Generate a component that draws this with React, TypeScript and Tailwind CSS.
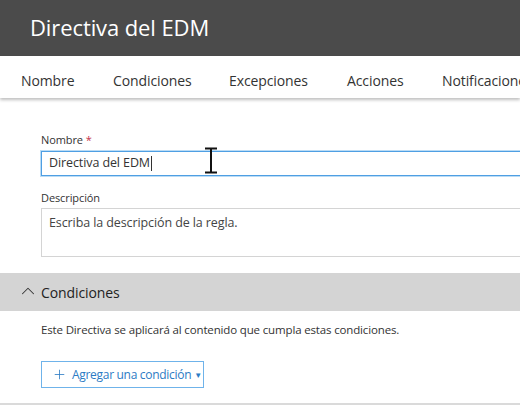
import { ChevronUp, Plus } from 'lucide-react';

const tabs = [
  { label: 'Nombre', w: 'w-[92px]' },
  { label: 'Condiciones', w: 'w-[116px]' },
  { label: 'Excepciones', w: 'w-[118px]' },
  { label: 'Acciones', w: 'w-[95px]' },
  { label: 'Notificaciones', w: 'w-[120px]' },
];

export default function App() {
  return (
    <div
      className="w-[520px] h-[407px] overflow-hidden bg-white text-[#333]"
      style={{ fontFamily: '"Open Sans", "Noto Sans", sans-serif' }}
    >
      {/* Header */}
      <div className="h-14 bg-[#4b4b4b] px-[30px] flex items-center">
        <h1 className="text-[22px] text-white tracking-[-0.1px] pb-[1px]">Directiva del EDM</h1>
      </div>

      {/* Tabs */}
      <nav className="h-[42px] bg-white flex items-center pl-[21px] shadow-[0_2px_3px_rgba(0,0,0,0.25)] relative z-10 whitespace-nowrap">
        {tabs.map((t) => (
          <div key={t.label} className={`${t.w} shrink-0 text-[14px] text-[#333] tracking-[-0.1px] pt-[6px]`}>
            {t.label}
          </div>
        ))}
      </nav>

      {/* Form */}
      <div className="pl-[41px] pt-[34px] relative">
        <label className="block text-[11px] text-[#333] leading-4 tracking-[-0.1px]">
          Nombre <span className="text-[#c4314b]">*</span>
        </label>
        <div className="mt-[3px] w-[500px] h-[25px] border border-[#4f9fe3] shadow-[0_0_0_1px_rgba(120,185,236,0.5)] flex items-center px-[7px] text-[12.5px] text-[#333] tracking-[-0.1px]">
          Directiva del EDM<span className="inline-block w-px h-[15px] bg-[#333] ml-px" />
        </div>
        <svg className="absolute left-[204px] top-[49px]" width="14" height="27" viewBox="0 0 14 27">
          <path d="M1 1.5h12M1 25.5h12M7 1.5v24" stroke="#111" strokeWidth="2" fill="none" />
        </svg>

        <label className="block text-[11px] text-[#333] leading-4 mt-[14px] tracking-[-0.1px]">Descripción</label>
        <div className="mt-[2px] w-[500px] h-[49px] border border-[#d4d4d4] px-[7px] pt-[5px] text-[12.5px] text-[#444] tracking-[-0.1px]">
          Escriba la descripción de la regla.
        </div>
      </div>

      {/* Conditions section */}
      <div className="mt-[16px] h-[38px] bg-[#d4d4d4] flex items-center pl-[17px]">
        <ChevronUp size={22} strokeWidth={1.1} className="text-[#333] -mt-[3px]" />
        <span className="ml-[2px] text-[14px] text-[#222] tracking-[-0.1px]">Condiciones</span>
      </div>
      <div className="pl-[41px] pt-[10px] text-[11.5px] text-[#333] tracking-[-0.15px]">
        Este Directiva se aplicará al contenido que cumpla estas condiciones.
      </div>
      <div className="pl-[41px] pt-[23px]">
        <button className="w-[163px] h-[27px] border border-[#6fb3ea] flex items-center pl-[10px] text-[12px] text-[#2c7bc4] tracking-[-0.3px] bg-white whitespace-nowrap">
          <Plus size={15} strokeWidth={1.3} className="mr-[5px] shrink-0" />
          Agregar una condición
          <span className="ml-[3px] text-[8px]">▼</span>
        </button>
      </div>
      <div className="mt-[15px] h-[2px] bg-[#dadada]" />
    </div>
  );
}
